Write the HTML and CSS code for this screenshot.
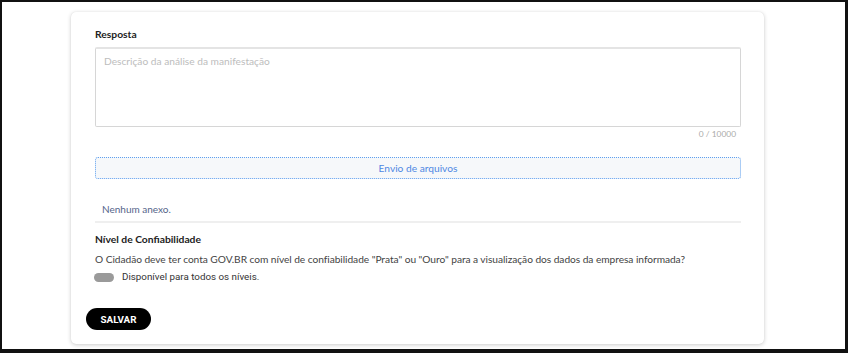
FILE: index.html
```html
<!DOCTYPE html>
<html lang="pt-BR">
<head>
    <meta charset="UTF-8">
    <meta name="viewport" content="width=device-width, initial-scale=1.0">
    <title>Resposta da manifestação</title>
    <link rel="stylesheet" href="styles.css">
</head>
<body>
    <div class="frame">
        <div class="card">
            <label class="field-label" for="resposta">Resposta</label>
            <textarea id="resposta" class="answer" placeholder="Descrição da análise da manifestação"></textarea>
            <div class="counter">0 / 10000</div>

            <div class="upload">Envio de arquivos</div>

            <div class="attachments">
                <div class="attachments-empty">Nenhum anexo.</div>
            </div>

            <div class="section-title">Nível de Confiabilidade</div>
            <p class="section-text">O Cidadão deve ter conta GOV.BR com nível de confiabilidade "Prata" ou "Ouro" para a visualização dos dados da empresa informada?</p>
            <div class="toggle-row">
                <span class="toggle"></span>
                <span class="toggle-label">Disponível para todos os níveis.</span>
            </div>

            <button class="save-btn">SALVAR</button>
        </div>
    </div>
</body>
</html>
```

FILE: styles.css
```css
body {
    margin: 0;
    background-color: #ffffff;
    font-family: Lato, "Open Sans", sans-serif;
}

.frame {
    box-sizing: border-box;
    height: 353px;
    border-style: solid;
    border-color: #111111;
    border-width: 2px 3px 4px 2px;
    padding: 10px 0 0 69px;
}

.card {
    box-sizing: border-box;
    width: 693px;
    height: 332px;
    padding: 14px 23px 0 24px;
    background-color: #ffffff;
    border-radius: 5px;
    box-shadow: 0 1px 4px rgba(0, 0, 0, 0.2), 0 0 1px rgba(0, 0, 0, 0.1);
    display: flex;
    flex-direction: column;
}

.card > * {
    flex-shrink: 0;
}

.field-label {
    font-size: 10.3px;
    font-weight: 700;
    line-height: 16px;
    color: #222222;
}

.answer {
    box-sizing: border-box;
    margin-top: 5px;
    height: 80px;
    padding: 6px 8px;
    border: 1px solid #d6d6d6;
    border-top: 2px solid #e4e4e4;
    border-radius: 2px;
    resize: none;
    font-family: inherit;
    font-size: 10.2px;
    color: #333333;
}

.answer::placeholder {
    color: #bdbdbd;
}

.counter {
    margin-top: 1px;
    padding-right: 5px;
    text-align: right;
    font-size: 8.4px;
    line-height: 12px;
    color: #aaaaaa;
}

.upload {
    margin-top: 17px;
    height: 20px;
    line-height: 20px;
    border: 1px dotted #5e9ff0;
    border-radius: 3px;
    background-color: #f6f8fa;
    text-align: center;
    font-size: 10.2px;
    color: #4f88e3;
}

.attachments {
    margin-top: 22px;
    padding: 0 7px 4px;
    border-bottom: 2px solid #efefef;
}

.attachments-empty {
    font-size: 10px;
    line-height: 16px;
    color: #55658a;
}

.section-title {
    margin-top: 8px;
    font-size: 10.3px;
    font-weight: 700;
    line-height: 16px;
    color: #222222;
}

.section-text {
    margin: 4px 0 0;
    font-size: 10.2px;
    letter-spacing: -0.05px;
    line-height: 16px;
    color: #444444;
}

.toggle-row {
    margin-top: 2px;
    display: flex;
    align-items: center;
    gap: 8px;
    line-height: 16px;
}

.toggle {
    margin-left: -1px;
    width: 20px;
    height: 9px;
    border-radius: 5px;
    background-color: #9a9a9a;
}

.toggle-label {
    font-family: Roboto, sans-serif;
    font-size: 9.8px;
    color: #333333;
}

.save-btn {
    margin: 23px 0 0 -9px;
    width: 65px;
    height: 22px;
    border: none;
    border-radius: 11px;
    background-color: #000000;
    color: #ffffff;
    font-family: Roboto, sans-serif;
    font-size: 9.8px;
    font-weight: 700;
    cursor: pointer;
}
```
